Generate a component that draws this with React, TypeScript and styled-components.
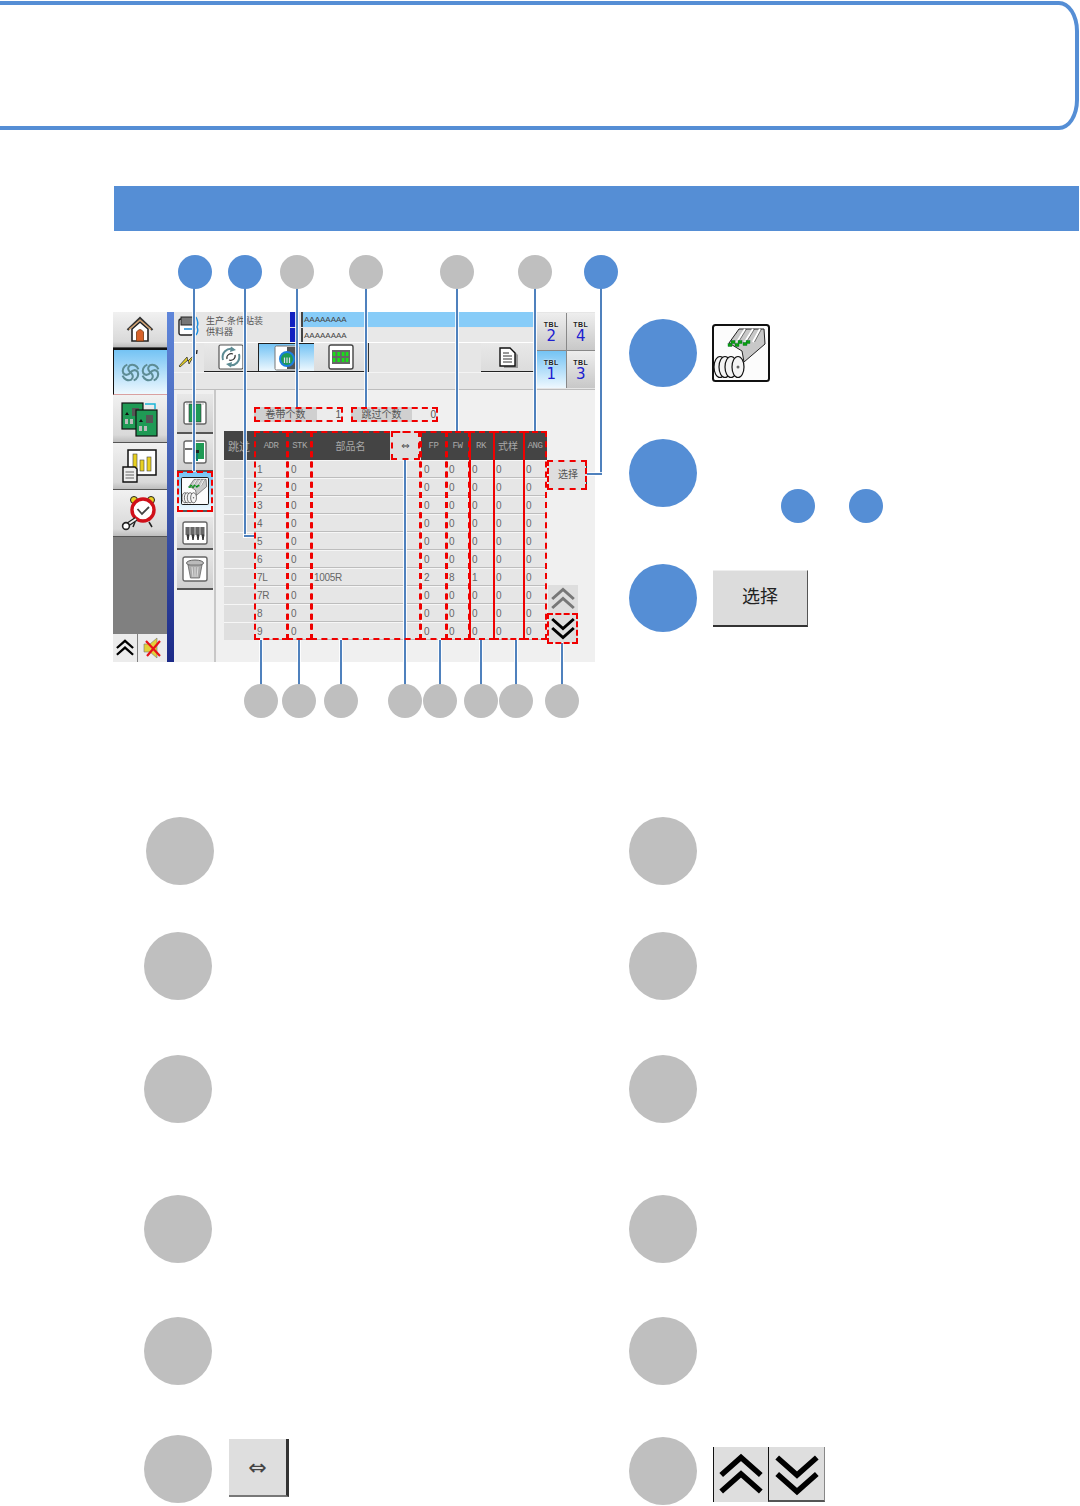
import { ReactNode } from 'react';
import styled, { createGlobalStyle } from 'styled-components';

const BLUE = '#558ed5';
const GREY = '#bfbfbf';
const FIGURE_TOP = 231;
const CJK = `'Liberation Sans', 'Noto Sans CJK SC', sans-serif`;

const Global = createGlobalStyle`
  html, body { margin: 0; padding: 0; background: #fff; }
  body { font-family: ${CJK}; }
`;

// TABLE DATA
const COLUMNS = '30px 34px 23px 79px 31px 25px 23px 24px 30px 24px';
const ADDRESSES = ['1', '2', '3', '4', '5', '6', '7L', '7R', '8', '9'];
const HEADERS = ['跳过', 'ADR', 'STK', '部品名', '⇔', 'FP', 'FW', 'RK', '式样', 'ANG'];

// page coordinates of the callouts over the screenshot
const TOP_BADGES = [
  { x: 195, color: BLUE },
  { x: 245, color: BLUE },
  { x: 297, color: GREY },
  { x: 366, color: GREY },
  { x: 457, color: GREY },
  { x: 535, color: GREY },
  { x: 601, color: BLUE },
];
const BOTTOM_BADGES = [261, 299, 341, 405, 440, 481, 516, 562];

const LEADERS = [
  { x: 193, y: 285, w: 2, h: 186 },
  { x: 244, y: 285, w: 2, h: 252 },
  { x: 244, y: 535, w: 10, h: 2 },
  { x: 296, y: 285, w: 2, h: 122 },
  { x: 365, y: 285, w: 2, h: 122 },
  { x: 456, y: 285, w: 2, h: 146 },
  { x: 534, y: 285, w: 2, h: 146 },
  { x: 600, y: 285, w: 2, h: 190 },
  { x: 587, y: 473, w: 15, h: 2 },
  { x: 260, y: 640, w: 2, h: 48 },
  { x: 298, y: 640, w: 2, h: 48 },
  { x: 340, y: 640, w: 2, h: 48 },
  { x: 404, y: 460, w: 2, h: 228 },
  { x: 439, y: 640, w: 2, h: 48 },
  { x: 480, y: 640, w: 2, h: 48 },
  { x: 515, y: 640, w: 2, h: 48 },
  { x: 561, y: 643, w: 2, h: 45 },
];

const RED_BOXES = [
  { x: 254, y: 407, w: 89, h: 15 },
  { x: 351, y: 407, w: 87, h: 15 },
  { x: 254, y: 431, w: 34, h: 209 },
  { x: 287, y: 431, w: 25, h: 209 },
  { x: 311, y: 431, w: 110, h: 209 },
  { x: 391, y: 431, w: 29, h: 29 },
  { x: 420, y: 431, w: 27, h: 209 },
  { x: 446, y: 431, w: 24, h: 209 },
  { x: 469, y: 431, w: 26, h: 209, solid: true },
  { x: 493, y: 431, w: 32, h: 209, solid: true },
  { x: 523, y: 431, w: 24, h: 209 },
  { x: 547, y: 460, w: 40, h: 30 },
  { x: 177, y: 471, w: 36, h: 41 },
  { x: 547, y: 613, w: 31, h: 31 },
];

// ICONS
const Chevrons = ({ up, size, color = '#000' }: { up?: boolean; size: number; color?: string }) => (
  <svg width={size} height={size} viewBox="0 0 40 40" fill="none" stroke={color} strokeWidth={5}>
    {up ? (
      <>
        <path d="M2 20 L20 4 L38 20" />
        <path d="M2 35 L20 19 L38 35" />
      </>
    ) : (
      <>
        <path d="M2 5 L20 21 L38 5" />
        <path d="M2 20 L20 36 L38 20" />
      </>
    )}
  </svg>
);

const HomeIcon = () => (
  <svg width="28" height="28" viewBox="0 0 28 28">
    <path d="M1.500 14 L14 2 L26.500 14" fill="none" stroke="#333" strokeWidth="2.200" />
    <path d="M3 13.500 L14 4 L25 13.500" fill="none" stroke="#d9a066" strokeWidth="1.200" />
    <path d="M6 13 L14 6 L22 13 V25 H6 Z" fill="#fff" stroke="#222" strokeWidth="1.600" />
    <path d="M10.500 25 V16 Q14 11 17.500 16 V25 Z" fill="#d8622a" stroke="#7a3a10" strokeWidth="0.800" />
  </svg>
);

const Swirl = ({ size, x = 0 }: { size: number; x?: number }) => (
  <svg x={x} width={size} height={size} viewBox="0 0 24 24" fill="none" stroke="#5d8c94" strokeWidth="2.600">
    {[0, 90, 180, 270].map((angle) => (
      <path
        key={angle}
        d="M12 12 C8.500 9 8 6 11 3 C15 1 20 3 22 8"
        transform={`rotate(${angle} 12 12)`}
      />
    ))}
  </svg>
);

const PcbCard = ({ x, y }: { x: number; y: number }) => (
  <g transform={`translate(${x} ${y})`}>
    <rect width="21" height="26" fill="#1f9a55" stroke="#111" strokeWidth="1.200" />
    <rect x="10" y="5" width="7" height="8" fill="#555" />
    <path d="M5 9 l2 3 h-4 z" fill="#111" />
    <rect x="3" y="16" width="3" height="5" fill="#bbb" />
    <rect x="8" y="16" width="3" height="5" fill="#bbb" />
  </g>
);

const PcbIcon = () => (
  <svg width="38" height="36" viewBox="0 0 38 36">
    <path d="M24 3 H34 V8" fill="none" stroke="#19b5d8" strokeWidth="1.500" />
    <PcbCard x={1} y={2} />
    <PcbCard x={15} y={9} />
  </svg>
);

const ChartIcon = () => (
  <svg width="36" height="36" viewBox="0 0 36 36">
    <rect x="6" y="2" width="28" height="25" fill="#fff" stroke="#111" strokeWidth="1.500" />
    <rect x="11" y="6" width="4" height="17" fill="#e8d020" stroke="#444" strokeWidth="0.600" />
    <rect x="18" y="12" width="4" height="11" fill="#e8d020" stroke="#444" strokeWidth="0.600" />
    <rect x="25" y="9" width="4" height="14" fill="#e8d020" stroke="#444" strokeWidth="0.600" />
    <path d="M1 19 H13 L15 21 V34 H1 Z" fill="#eee" stroke="#111" strokeWidth="1.400" />
    <path d="M3.500 24 H12 M3.500 27 H12 M3.500 30 H12" stroke="#666" />
  </svg>
);

const AlarmIcon = () => (
  <svg width="38" height="38" viewBox="0 0 38 38">
    <path d="M14 28 L12 33 M28 28 L31 33" stroke="#222" strokeWidth="1.500" />
    <circle cx="13" cy="6" r="3.500" fill="#e8d020" stroke="#222" />
    <circle cx="30" cy="6" r="3.500" fill="#e8d020" stroke="#222" />
    <circle cx="22" cy="16" r="11" fill="#fff" stroke="#d0101a" strokeWidth="3.400" />
    <path d="M16.500 15 L21 20 L28 13" fill="none" stroke="#444" strokeWidth="1.800" />
    <path d="M15 25 L6 31" stroke="#222" strokeWidth="4.400" />
    <path d="M15 25 L6 31" stroke="#eee" strokeWidth="2" />
    <circle cx="5" cy="32" r="3.400" fill="#fff" stroke="#222" strokeWidth="1.600" />
  </svg>
);

const MuteIcon = () => (
  <svg width="22" height="24" viewBox="0 0 22 24">
    <path d="M2 8 H8 L15 2 V22 L8 16 H2 Z" fill="#e3d03a" stroke="#777" strokeWidth="0.600" />
    <path d="M4 5 L18 20 M18 5 L5 20" stroke="#e8101a" strokeWidth="2.200" />
  </svg>
);

const ClipboardIcon = () => (
  <svg width="24" height="28" viewBox="0 0 24 28">
    <path d="M6 7 H16 L20 11 V24 H6 Z" fill="#999" transform="translate(2 1)" />
    <path d="M4 5 H14 L19 10 V23 H4 Z" fill="#fff" stroke="#111" strokeWidth="1.400" />
    <path d="M7 10 H13 M7 13 H16 M7 16 H16 M7 19 H16" stroke="#333" />
  </svg>
);

const FlashIcon = () => (
  <svg width="22" height="20" viewBox="0 0 22 20">
    <path d="M1 18 L9 9 L10 13 L17 6 L11 16 L10 12 L2 19 Z" fill="#e6d020" stroke="#333" strokeWidth="0.800" />
    <path d="M19 2 L18.500 6" stroke="#222" strokeWidth="1.400" />
  </svg>
);

const FeederIcon = ({ size }: { size: number }) => (
  <svg width={size} height={size} viewBox="0 0 58 58">
    <rect x="1" y="1" width="56" height="56" rx="2.500" fill="#fcfcfc" stroke="#111" strokeWidth="2" />
    <path d="M17 19 L27 5 H52 L53 20 L32 38 L30 27 Z" fill="#c8c8c8" stroke="#222" strokeWidth="1" />
    <path d="M25 18 L33 5 M33 18 L41 5 M41 18 L48 5" stroke="#fff" strokeWidth="2" />
    <path d="M25 18 L33 5 M33 18 L41 5 M41 18 L48 5" stroke="#333" strokeWidth="0.600" transform="translate(1.500 0)" />
    {[[21, 18], [28, 18], [36, 18], [18, 21], [25, 21], [33, 20]].map(([cx, cy]) => (
      <rect key={`${cx}-${cy}`} x={cx - 2} y={cy - 1.500} width="4" height="3" fill="#0aa30a" stroke="#063" strokeWidth="0.400" />
    ))}
    {[8, 13, 19, 26].map((cx) => (
      <ellipse key={cx} cx={cx} cy="43" rx="6" ry="10.500" fill="#f4f4f4" stroke="#111" strokeWidth="1.200" />
    ))}
    <circle cx="26" cy="43" r="1.500" fill="#666" />
  </svg>
);

const BoardFrontIcon = () => (
  <svg width="24" height="24" viewBox="0 0 24 24">
    <rect x="1" y="1" width="22" height="22" rx="2" fill="#fff" stroke="#666" strokeWidth="1.400" />
    <rect x="6" y="3" width="12" height="18" fill="#1f9a55" stroke="#333" strokeWidth="0.600" />
    <path d="M3 3 H5 M19 3 H21" stroke="#bbb" />
  </svg>
);

const BoardSideIcon = () => (
  <svg width="24" height="24" viewBox="0 0 24 24">
    <rect x="1" y="1" width="22" height="22" rx="2" fill="#fff" stroke="#666" strokeWidth="1.400" />
    <rect x="12" y="3" width="9" height="16" fill="#1f9a55" />
    <path d="M2 9 H11" stroke="#333" strokeWidth="1.400" />
    <path d="M14 10 V21" stroke="#0a7a70" strokeWidth="2" />
    <rect x="12" y="10" width="4" height="3" fill="#222" />
  </svg>
);

const NozzleIcon = () => (
  <svg width="26" height="24" viewBox="0 0 26 24">
    <rect x="1" y="1" width="24" height="22" rx="2" fill="#fff" stroke="#666" strokeWidth="1.400" />
    <rect x="3.500" y="6" width="19" height="8" fill="#666" />
    <path d="M8 6 V14 M13 6 V14 M18 6 V14" stroke="#ccc" />
    <path d="M5 14 l1 5 l1 -5 z M10 14 l1 5 l1 -5 z M15 14 l1 5 l1 -5 z M20 14 l1 5 l1 -5 z" fill="#333" stroke="#333" />
  </svg>
);

const TrashIcon = () => (
  <svg width="26" height="26" viewBox="0 0 26 26">
    <rect x="1" y="1" width="24" height="24" rx="2" fill="#fff" stroke="#666" strokeWidth="1.400" />
    <ellipse cx="13" cy="7" rx="8.500" ry="3" fill="#bbb" stroke="#666" />
    <path d="M6 9 L8.500 22 H17.500 L20 9 Z" fill="#aaa" stroke="#666" strokeWidth="0.800" />
    <path d="M10 11 L11 21 M13 11 V21 M16 11 L15 21" stroke="#ddd" />
  </svg>
);

const TabCycleIcon = () => (
  <svg width="26" height="26" viewBox="0 0 26 26" fill="none">
    <rect x="1" y="1" width="24" height="24" rx="1.500" fill="#fff" stroke="#555" strokeWidth="1.200" />
    <path d="M5 16 C3 9 9 3.500 15 5" stroke="#5d8c94" strokeWidth="2" />
    <path d="M21 10 C23 17 17 22.500 11 21" stroke="#5d8c94" strokeWidth="2" />
    <path d="M13 2.500 L18 6 L12 8 Z M13 23.500 L8 20 L14 18 Z" fill="#5d8c94" />
    <path d="M9 15 C8 11 12 9 15 10 M17 11 C18 15 14 17 11 16" stroke="#333" strokeWidth="1.200" />
  </svg>
);

const TabNozzleIcon = () => (
  <svg width="26" height="26" viewBox="0 0 26 26">
    <rect x="1" y="1" width="24" height="24" rx="1.500" fill="#fff" stroke="#777" strokeWidth="1" />
    <rect x="13" y="2" width="11" height="22" fill="#555" />
    <circle cx="13" cy="14" r="7" fill="#1f9a55" stroke="#1c7fe0" strokeWidth="2" />
    <path d="M10.500 12.500 V18 M13 12.500 V18 M15.500 12.500 V18" stroke="#dde" strokeWidth="1.200" />
  </svg>
);

const TabBoardIcon = () => (
  <svg width="26" height="26" viewBox="0 0 26 26">
    <rect x="1" y="1" width="24" height="24" rx="2" fill="#fff" stroke="#444" strokeWidth="1.400" />
    <rect x="4" y="6" width="18" height="14" fill="#666" />
    {[6, 10.500, 15, 19].map((x) => (
      <g key={x}>
        <rect x={x - 1.200} y="8" width="2.600" height="4" fill="#18e018" />
        <rect x={x - 1.200} y="14" width="2.600" height="4" fill="#18e018" />
      </g>
    ))}
  </svg>
);

// SCREENSHOT PARTS
const Panel = styled.div`
  width: 482px;
  height: 350px;
  display: flex;
  flex-shrink: 0;
  background-color: #f0f0f0;
  overflow: hidden;
`;

const Nav = styled.div`
  width: 54px;
  display: flex;
  flex-direction: column;
  background-color: #808080;
`;

const NavButton = styled.div<{ $height: number; $active?: boolean }>`
  height: ${(p) => p.$height}px;
  box-sizing: border-box;
  display: flex;
  align-items: center;
  justify-content: center;
  flex-shrink: 0;
  background: ${(p) =>
    p.$active ? 'linear-gradient(#74c3f4, #eef8fe)' : 'linear-gradient(#f1f1f1, #d9d9d9 85%, #bdbdbd)'};
  border-bottom: 1px solid ${(p) => (p.$active ? '#d9a0a0' : '#555')};
  border-top: ${(p) => (p.$active ? '2px solid #111' : '0')};
  border-left: ${(p) => (p.$active ? '1px solid #111' : '0')};
`;

const NavSpacer = styled.div`
  flex: 1;
`;

const NavFooter = styled.div`
  height: 28px;
  display: flex;
  gap: 1px;
  background-color: #808080;
`;

const FooterButton = styled.div<{ $width: number }>`
  width: ${(p) => p.$width}px;
  display: flex;
  align-items: center;
  justify-content: center;
  background: #ececec;
`;

const Strip = styled.div`
  width: 7px;
  flex-shrink: 0;
  background: linear-gradient(#5f86da, #3d57ab 55%, #1c2a88);
`;

const Body = styled.div`
  flex: 1;
  display: flex;
  flex-direction: column;
  min-width: 0;
`;

const TopArea = styled.div`
  height: 78px;
  display: flex;
  background-color: #e6e6e6;
  border-bottom: 1px solid #bdbdbd;
  box-sizing: border-box;
`;

const TopMain = styled.div`
  width: 360px;
  display: flex;
  flex-direction: column;
`;

const HeaderRow = styled.div`
  height: 30px;
  display: flex;
  align-items: flex-start;
`;

const MachineIcon = styled.div`
  width: 32px;
  height: 30px;
  display: flex;
  align-items: center;
  justify-content: center;
`;

const MachineTitle = styled.div`
  width: 84px;
  font-size: 9px;
  line-height: 11px;
  color: #555;
  padding-top: 4px;
  white-space: nowrap;
`;

const DataFields = styled.div`
  flex: 1;
  display: flex;
  flex-direction: column;
  gap: 1px;
`;

const DataLine = styled.div`
  height: 15px;
  display: flex;
`;

const DataMark = styled.span`
  width: 6px;
  margin-right: 5px;
  background-color: #1020c0;
  flex-shrink: 0;
`;

const DataField = styled.div<{ $selected?: boolean }>`
  flex: 1;
  display: flex;
  align-items: center;
  padding-left: 1px;
  font-size: 8px;
  color: #444;
  border-left: 2px solid #444;
  background-color: ${(p) => (p.$selected ? '#87ccf8' : '#e8e8e8')};
`;

const TabRow = styled.div`
  height: 30px;
  display: flex;
  align-items: stretch;
  border-top: 1px solid #fff;
  box-sizing: border-box;
`;

const FlashCell = styled.div`
  width: 30px;
  display: flex;
  align-items: center;
  justify-content: center;
`;

const Tab = styled.div<{ $active?: boolean; $width: number; $end?: boolean }>`
  width: ${(p) => p.$width}px;
  display: flex;
  align-items: center;
  justify-content: center;
  box-sizing: border-box;
  background: ${(p) => (p.$active ? 'linear-gradient(#74c3f4, #eef8fe)' : 'linear-gradient(#e8e8e8, #dcdcdc)')};
  border-bottom: 1px solid #222;
  border-top: ${(p) => (p.$active ? '1px solid #222' : '0')};
  border-left: ${(p) => (p.$active ? '1px solid #222' : '0')};
  border-right: ${(p) => (p.$end ? '2px solid #333' : '0')};
`;

const TabGap = styled.div`
  flex: 1;
  background-color: #e6e6e6;
`;

const StripRow = styled.div`
  flex: 1;
  border-top: 1px solid #f4f4f4;
`;

const TblGrid = styled.div`
  width: 58px;
  margin-left: 3px;
  margin-top: 1px;
  height: 75px;
  display: grid;
  grid-template-columns: 1fr 1fr;
  grid-template-rows: 1fr 1fr;
  gap: 1px;
  background-color: #888;
`;

const TblButton = styled.div<{ $active?: boolean }>`
  display: flex;
  flex-direction: column;
  align-items: center;
  justify-content: center;
  padding-top: 2px;
  box-sizing: border-box;
  background: ${(p) => (p.$active ? 'linear-gradient(#74c3f4, #eef8fe)' : 'linear-gradient(#eeeeee, #c8c8c8)')};
`;

const TblLabel = styled.span`
  font-size: 7px;
  line-height: 8px;
  font-weight: 700;
  letter-spacing: 0.5px;
  color: #222;
  text-shadow: 0 0 2px #fff;
`;

const TblNumber = styled.span`
  font-size: 15px;
  line-height: 15px;
  color: #2020d0;
  font-family: 'DejaVu Sans', sans-serif;
`;

const Work = styled.div`
  flex: 1;
  display: flex;
  min-height: 0;
`;

const Side = styled.div`
  width: 42px;
  box-sizing: border-box;
  padding: 4px 0 0 3px;
  border-right: 2px solid #c8c8c8;
  display: flex;
  flex-direction: column;
`;

const SideButton = styled.div<{ $height: number; $active?: boolean }>`
  width: 36px;
  height: ${(p) => p.$height}px;
  display: flex;
  align-items: center;
  justify-content: center;
  flex-shrink: 0;
  box-sizing: border-box;
  background: ${(p) => (p.$active ? 'linear-gradient(#74c3f4, #eef8fe)' : 'linear-gradient(#e8e8e8, #cfcfcf)')};
  border-bottom: 2px solid #555;
`;

const SideGap = styled.div`
  height: 5px;
`;

const Main = styled.div`
  flex: 1;
  padding: 17px 0 0 8px;
  min-width: 0;
`;

const FieldRow = styled.div`
  display: flex;
  gap: 8px;
  margin-left: 30px;
  height: 15px;
`;

const Field = styled.div<{ $width: number }>`
  width: ${(p) => p.$width}px;
  display: flex;
  font-size: 10px;
  color: #555;
`;

const FieldLabel = styled.span`
  flex: 1;
  text-align: center;
  line-height: 15px;
  background-color: #d0d0d0;
`;

const FieldValue = styled.span`
  width: 26px;
  text-align: right;
  padding-right: 2px;
  line-height: 15px;
  box-sizing: border-box;
  background-color: #ececec;
`;

const TableArea = styled.div`
  display: flex;
  margin-top: 9px;
`;

const Table = styled.div`
  width: 323px;
  flex-shrink: 0;
`;

const HeadRow = styled.div`
  display: grid;
  grid-template-columns: ${COLUMNS};
  height: 29px;
`;

const HeadCell = styled.div<{ $light?: boolean; $latin?: boolean }>`
  display: flex;
  align-items: center;
  justify-content: center;
  font-family: ${(p) => (p.$latin ? `'Liberation Mono', monospace` : CJK)};
  font-size: ${(p) => (p.$latin ? 9 : 10)}px;
  letter-spacing: ${(p) => (p.$latin ? '-0.5px' : '0')};
  color: ${(p) => (p.$light ? '#444' : '#a8a8a8')};
  background-color: ${(p) => (p.$light ? '#dedede' : '#444')};
  overflow: hidden;
  white-space: nowrap;
  &:first-child {
    font-size: 11px;
    justify-content: flex-start;
    padding-left: 4px;
  }
`;

const ArrowGlyph = styled.span`
  font-family: 'DejaVu Sans', sans-serif;
`;

const DataRow = styled.div`
  display: grid;
  grid-template-columns: ${COLUMNS};
  height: 18px;
  box-sizing: border-box;
  background-color: #e6e6e6;
  border-top: 1px solid #f6f6f6;
  border-bottom: 1px solid #bdbdbd;
`;

const DataCell = styled.div<{ $shade?: boolean; $divider?: boolean }>`
  font-size: 10px;
  letter-spacing: -0.300px;
  line-height: 17px;
  padding-left: ${(p) => (p.$divider ? 2 : 3)}px;
  color: #666;
  white-space: nowrap;
  background-color: ${(p) => (p.$shade ? '#dfdfdf' : 'transparent')};
  border-left: ${(p) => (p.$divider ? '1px solid #f6f6f6' : '0')};
`;

const TableSide = styled.div`
  width: 31px;
  margin-left: 1px;
  padding-top: 29px;
  display: flex;
  flex-direction: column;
`;

const PickButton = styled.div`
  width: 39px;
  height: 30px;
  display: flex;
  align-items: center;
  justify-content: center;
  padding: 0 0 3px 2px;
  font-size: 10px;
  color: #555;
  background-color: #dedede;
  border-right: 1px solid #333;
  box-sizing: border-box;
`;

const PageButtons = styled.div`
  margin-top: 95px;
  display: flex;
  flex-direction: column;
`;

const PageButton = styled.div<{ $height: number }>`
  width: 30px;
  height: ${(p) => p.$height}px;
  display: flex;
  align-items: center;
  justify-content: center;
  background-color: #dedede;
`;

// CALLOUTS OVER THE SCREENSHOT
const Badge = styled.div<{ $x: number; $y: number; $color: string }>`
  position: absolute;
  left: ${(p) => p.$x - 17}px;
  top: ${(p) => p.$y - 17 - FIGURE_TOP}px;
  width: 34px;
  height: 34px;
  border-radius: 50%;
  background-color: ${(p) => p.$color};
  z-index: 3;
`;

const Leader = styled.div<{ $x: number; $y: number; $w: number; $h: number }>`
  position: absolute;
  left: ${(p) => p.$x}px;
  top: ${(p) => p.$y - FIGURE_TOP}px;
  width: ${(p) => p.$w}px;
  height: ${(p) => p.$h}px;
  background-color: #4f81bd;
  box-shadow: 0 0 0 1px rgba(255, 255, 255, 0.85);
  z-index: 1;
`;

const RedBox = styled.div<{ $x: number; $y: number; $w: number; $h: number; $solid?: boolean }>`
  position: absolute;
  left: ${(p) => p.$x}px;
  top: ${(p) => p.$y - FIGURE_TOP}px;
  width: ${(p) => p.$w}px;
  height: ${(p) => p.$h}px;
  box-sizing: border-box;
  border: 2px dashed #f00000;
  border-left-style: ${(p) => (p.$solid ? 'solid' : 'dashed')};
  border-right-style: ${(p) => (p.$solid ? 'solid' : 'dashed')};
  z-index: 2;
`;

// PAGE
const Page = styled.div`
  width: 1080px;
  height: 1506px;
  overflow: hidden;
  background-color: #fff;
`;

const Banner = styled.div`
  width: 1109px;
  height: 129px;
  margin: 1px 0 0 -30px;
  box-sizing: border-box;
  border: 4px solid ${BLUE};
  border-radius: 20px / 30px;
`;

const SectionBar = styled.div`
  height: 45px;
  margin: 56px 1px 0 114px;
  background-color: ${BLUE};
`;

const Figure = styled.div`
  position: relative;
  height: 586px;
  box-sizing: border-box;
  padding: 81px 0 0 113px;
  display: flex;
`;

const Legend = styled.div`
  margin: 7px 0 0 34px;
  display: flex;
  flex-direction: column;
`;

const LegendRow = styled.div<{ $gap: number }>`
  display: flex;
  align-items: center;
  gap: 15px;
  margin-bottom: ${(p) => p.$gap}px;
`;

const Dot = styled.div<{ $color: string }>`
  width: 68px;
  height: 68px;
  border-radius: 50%;
  flex-shrink: 0;
  background-color: ${(p) => p.$color};
`;

const SmallDots = styled.div`
  display: flex;
  gap: 34px;
  align-self: flex-start;
  margin: 50px 0 -16px 69px;
`;

const SmallDot = styled.div`
  width: 34px;
  height: 34px;
  border-radius: 50%;
  background-color: ${BLUE};
`;

const BigPick = styled.div`
  width: 95px;
  height: 57px;
  margin-left: 1px;
  display: flex;
  align-items: center;
  justify-content: center;
  padding-bottom: 6px;
  box-sizing: border-box;
  font-size: 18px;
  color: #222;
  background-color: #dcdcdc;
  border-bottom: 2px solid #333;
  border-right: 1px solid #555;
  border-top: 1px solid #eee;
`;

const Grid = styled.div`
  display: grid;
  grid-template-columns: 485px 1fr;
  grid-template-rows: 115px 123px 140px 122px 118px auto;
  padding-left: 144px;
`;

const Item = styled.div<{ $offsetX?: number; $offsetY?: number }>`
  display: flex;
  align-items: flex-start;
  gap: 17px;
  margin-left: ${(p) => p.$offsetX ?? 0}px;
  margin-top: ${(p) => p.$offsetY ?? 0}px;
`;

const SwapButton = styled.div`
  width: 60px;
  height: 58px;
  margin-top: 4px;
  display: flex;
  align-items: center;
  justify-content: center;
  box-sizing: border-box;
  font-family: 'DejaVu Sans', sans-serif;
  font-size: 22px;
  color: #444;
  background-color: #dedede;
  border-right: 3px solid #333;
  border-bottom: 2px solid #777;
`;

const PagePair = styled.div`
  display: flex;
  margin: 10px 0 0 -1px;
`;

const BigPage = styled.div<{ $down?: boolean }>`
  width: ${(p) => (p.$down ? 57 : 55)}px;
  height: 55px;
  display: flex;
  align-items: center;
  justify-content: center;
  box-sizing: border-box;
  background-color: #dedede;
  border-left: 1px solid #111;
  border-bottom: ${(p) => (p.$down ? '2px solid #555' : '0')};
  border-right: ${(p) => (p.$down ? '1px solid #888' : '0')};
`;

const Cell = ({ children, shade, divider }: { children?: ReactNode; shade?: boolean; divider?: boolean }) => (
  <DataCell $shade={shade} $divider={divider}>
    {children}
  </DataCell>
);

const rowValues = (address: string) => {
  const mounted = address === '7L';
  return {
    part: mounted ? '1005R' : '',
    fp: mounted ? '2' : '0',
    fw: mounted ? '8' : '0',
    rk: mounted ? '1' : '0',
  };
};

const Screenshot = () => (
  <Panel>
    <Nav>
      <NavButton $height={36}>
        <HomeIcon />
      </NavButton>
      <NavButton $height={47} $active>
        <svg width="40" height="19" viewBox="0 0 40 19">
          <Swirl size={19} />
          <Swirl size={19} x={20} />
        </svg>
      </NavButton>
      <NavButton $height={48}>
        <PcbIcon />
      </NavButton>
      <NavButton $height={47}>
        <ChartIcon />
      </NavButton>
      <NavButton $height={47}>
        <AlarmIcon />
      </NavButton>
      <NavSpacer />
      <NavFooter>
        <FooterButton $width={24}>
          <Chevrons up size={18} />
        </FooterButton>
        <FooterButton $width={29}>
          <MuteIcon />
        </FooterButton>
      </NavFooter>
    </Nav>
    <Strip />
    <Body>
      <TopArea>
        <TopMain>
          <HeaderRow>
            <MachineIcon>
              <svg width="24" height="24" viewBox="0 0 24 24">
                <rect x="1" y="4" width="14" height="16" rx="2" fill="#fff" stroke="#222" strokeWidth="1.400" />
                <rect x="3" y="2" width="14" height="8" fill="#777" stroke="#222" />
                <path d="M6 14 H18 M18 2 Q21 8 19 12 Q21 16 18 20" fill="none" stroke="#1c8fe0" strokeWidth="1.400" />
              </svg>
            </MachineIcon>
            <MachineTitle>
              生产-条件贴装
              <br />
              供料器
            </MachineTitle>
            <DataFields>
              <DataLine>
                <DataMark />
                <DataField $selected>AAAAAAAA</DataField>
              </DataLine>
              <DataLine>
                <DataMark />
                <DataField>AAAAAAAA</DataField>
              </DataLine>
            </DataFields>
          </HeaderRow>
          <TabRow>
            <FlashCell>
              <FlashIcon />
            </FlashCell>
            <Tab $width={54}>
              <TabCycleIcon />
            </Tab>
            <Tab $width={56} $active>
              <TabNozzleIcon />
            </Tab>
            <Tab $width={55} $end>
              <TabBoardIcon />
            </Tab>
            <TabGap />
            <Tab $width={53}>
              <ClipboardIcon />
            </Tab>
          </TabRow>
          <StripRow />
        </TopMain>
        <TblGrid>
          <TblButton>
            <TblLabel>TBL</TblLabel>
            <TblNumber>2</TblNumber>
          </TblButton>
          <TblButton>
            <TblLabel>TBL</TblLabel>
            <TblNumber>4</TblNumber>
          </TblButton>
          <TblButton $active>
            <TblLabel>TBL</TblLabel>
            <TblNumber>1</TblNumber>
          </TblButton>
          <TblButton>
            <TblLabel>TBL</TblLabel>
            <TblNumber>3</TblNumber>
          </TblButton>
        </TblGrid>
      </TopArea>
      <Work>
        <Side>
          <SideButton $height={40}>
            <BoardFrontIcon />
          </SideButton>
          <SideButton $height={38}>
            <BoardSideIcon />
          </SideButton>
          <SideButton $height={40} $active>
            <FeederIcon size={28} />
          </SideButton>
          <SideGap />
          <SideButton $height={33}>
            <NozzleIcon />
          </SideButton>
          <SideButton $height={40}>
            <TrashIcon />
          </SideButton>
        </Side>
        <Main>
          <FieldRow>
            <Field $width={89}>
              <FieldLabel>卷带个数</FieldLabel>
              <FieldValue>1</FieldValue>
            </Field>
            <Field $width={87}>
              <FieldLabel>跳过个数</FieldLabel>
              <FieldValue>0</FieldValue>
            </Field>
          </FieldRow>
          <TableArea>
            <Table>
              <HeadRow>
                {HEADERS.map((title) => (
                  <HeadCell key={title} $light={title === '⇔'} $latin={/^[A-Z]+$/.test(title)}>
                    {title === '⇔' ? <ArrowGlyph>{title}</ArrowGlyph> : title}
                  </HeadCell>
                ))}
              </HeadRow>
              {ADDRESSES.map((address) => {
                const row = rowValues(address);
                return (
                  <DataRow key={address}>
                    <Cell shade />
                    <Cell>{address}</Cell>
                    <Cell>0</Cell>
                    <Cell>{row.part}</Cell>
                    <Cell />
                    <Cell divider>{row.fp}</Cell>
                    <Cell>{row.fw}</Cell>
                    <Cell>{row.rk}</Cell>
                    <Cell>0</Cell>
                    <Cell>0</Cell>
                  </DataRow>
                );
              })}
            </Table>
            <TableSide>
              <PickButton>选择</PickButton>
              <PageButtons>
                <PageButton $height={28}>
                  <Chevrons up size={24} color="#777" />
                </PageButton>
                <PageButton $height={30}>
                  <Chevrons size={24} />
                </PageButton>
              </PageButtons>
            </TableSide>
          </TableArea>
        </Main>
      </Work>
    </Body>
  </Panel>
);

const App = () => (
  <Page>
    <Global />
    <Banner />
    <SectionBar />
    <Figure>
      <Screenshot />
      <Legend>
        <LegendRow $gap={52}>
          <Dot $color={BLUE} />
          <FeederIcon size={58} />
        </LegendRow>
        <LegendRow $gap={57}>
          <Dot $color={BLUE} />
          <SmallDots>
            <SmallDot />
            <SmallDot />
          </SmallDots>
        </LegendRow>
        <LegendRow $gap={0}>
          <Dot $color={BLUE} />
          <BigPick>选择</BigPick>
        </LegendRow>
      </Legend>
      {LEADERS.map((line) => (
        <Leader key={`${line.x}-${line.y}`} $x={line.x} $y={line.y} $w={line.w} $h={line.h} />
      ))}
      {RED_BOXES.map((box) => (
        <RedBox key={`${box.x}-${box.y}`} $x={box.x} $y={box.y} $w={box.w} $h={box.h} $solid={box.solid} />
      ))}
      {TOP_BADGES.map((badge) => (
        <Badge key={badge.x} $x={badge.x} $y={272} $color={badge.color} />
      ))}
      {BOTTOM_BADGES.map((x) => (
        <Badge key={x} $x={x} $y={701} $color={GREY} />
      ))}
    </Figure>
    <Grid>
      <Item $offsetX={2}>
        <Dot $color={GREY} />
      </Item>
      <Item>
        <Dot $color={GREY} />
      </Item>
      <Item>
        <Dot $color={GREY} />
      </Item>
      <Item>
        <Dot $color={GREY} />
      </Item>
      <Item>
        <Dot $color={GREY} />
      </Item>
      <Item>
        <Dot $color={GREY} />
      </Item>
      <Item>
        <Dot $color={GREY} />
      </Item>
      <Item>
        <Dot $color={GREY} />
      </Item>
      <Item>
        <Dot $color={GREY} />
      </Item>
      <Item>
        <Dot $color={GREY} />
      </Item>
      <Item>
        <Dot $color={GREY} />
        <SwapButton>⇔</SwapButton>
      </Item>
      <Item $offsetY={2}>
        <Dot $color={GREY} />
        <PagePair>
          <BigPage>
            <Chevrons up size={44} />
          </BigPage>
          <BigPage $down>
            <Chevrons size={44} />
          </BigPage>
        </PagePair>
      </Item>
    </Grid>
  </Page>
);

export default App;
